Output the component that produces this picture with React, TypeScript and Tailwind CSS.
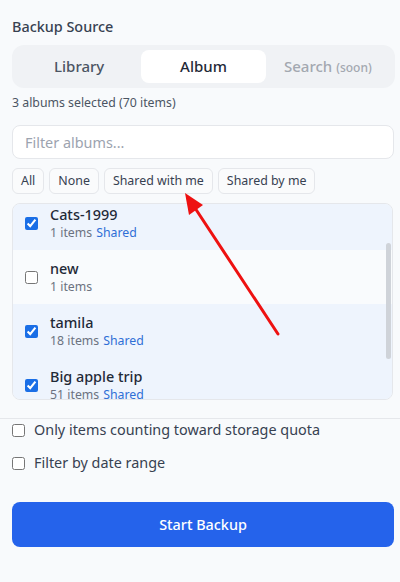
import { useState } from 'react';

type Album = {
  id: string;
  name: string;
  count: number;
  shared: boolean;
};

const albums: Album[] = [
  { id: 'a1', name: 'Cats-1999', count: 1, shared: true },
  { id: 'a2', name: 'new', count: 1, shared: false },
  { id: 'a3', name: 'tamila', count: 18, shared: true },
  { id: 'a4', name: 'Big apple trip', count: 51, shared: true },
  { id: 'a5', name: 'Summer 2021', count: 42, shared: false },
  { id: 'a6', name: 'Screenshots', count: 9, shared: false },
];

const sources = ['Library', 'Album', 'Search'] as const;

export default function App() {
  const [source, setSource] = useState<string>('Album');
  const [selected, setSelected] = useState<string[]>(['a1', 'a3', 'a4']);
  const [filter, setFilter] = useState('');
  const [quotaOnly, setQuotaOnly] = useState(false);
  const [dateRange, setDateRange] = useState(false);

  const toggle = (id: string) => {
    setSelected((prev) =>
      prev.includes(id) ? prev.filter((x) => x !== id) : [...prev, id]
    );
  };

  const totalItems = albums
    .filter((a) => selected.includes(a.id))
    .reduce((sum, a) => sum + a.count, 0);

  return (
    <main className="relative min-h-[582px] w-full bg-[#f8fafc] font-['Noto_Sans',sans-serif] text-[#1f2937]">
      <div className="px-3 pt-[17px]">
        <h2 className="text-[14.4px] leading-5 font-medium text-[#374151]">Backup Source</h2>

        {/* source switcher */}
        <div className="mt-2 grid grid-cols-3 rounded-xl bg-[#f0f2f5] p-[5px] w-[383px]">
          {sources.map((s) => {
            const active = source === s;
            const disabled = s === 'Search';
            return (
              <button
                key={s}
                disabled={disabled}
                onClick={() => setSource(s)}
                className={
                  active
                    ? 'h-[33px] rounded-lg bg-white text-[15px] font-medium text-[#1f2937]'
                    : disabled
                    ? 'h-[33px] rounded-lg text-[15px] font-medium text-[#a3a8b0]'
                    : 'h-[33px] rounded-lg text-[15px] font-medium text-[#4b5563]'
                }
              >
                {s}
                {disabled && <span className="ml-1 text-[12px] font-medium">(soon)</span>}
              </button>
            );
          })}
        </div>

        <p className="mt-[7px] text-[12.3px] leading-4 text-[#4b5563]">
          {selected.length} albums selected ({totalItems} items)
        </p>

        <input
          value={filter}
          onChange={(e) => setFilter(e.target.value)}
          placeholder="Filter albums..."
          className="mt-[14px] h-[34px] w-[382px] rounded-lg border border-[#e5e7eb] bg-white px-3 text-[14.4px] text-[#1f2937] placeholder:text-[#9ca3af] outline-none"
        />

        <div className="mt-[9px] flex gap-[5px]">
          {['All', 'None', 'Shared with me', 'Shared by me'].map((c) => (
            <button
              key={c}
              className="h-[26px] rounded-md border border-[#e5e7eb] bg-[#fafbfc] px-2 text-[12.4px] text-[#374151]"
            >
              {c}
            </button>
          ))}
        </div>

        {/* album list */}
        <div className="relative mt-[9px] h-[197px] w-[381px] overflow-hidden rounded-lg border border-[#e5e7eb] bg-[#f8fafc]">
          <div className="-mt-[8px]">
            {albums
              .filter((a) => a.name.toLowerCase().includes(filter.toLowerCase()))
              .map((a) => {
                const checked = selected.includes(a.id);
                return (
                  <label
                    key={a.id}
                    className={
                      checked
                        ? 'flex h-[54px] cursor-pointer items-center gap-3 bg-[#eef4fd] pl-3'
                        : 'flex h-[54px] cursor-pointer items-center gap-3 bg-[#f9fbfd] pl-3'
                    }
                  >
                    <input
                      type="checkbox"
                      checked={checked}
                      onChange={() => toggle(a.id)}
                      className="m-0 h-[13px] w-[13px] accent-[#1a6ee6]"
                    />
                    <div className="flex flex-col">
                      <span className="text-[14.4px] leading-5 font-medium text-[#1f2937]">{a.name}</span>
                      <span className="text-[12.3px] leading-4 text-[#6b7280]">
                        {a.count} items
                        {a.shared && <span className="ml-1 text-[#2f6fd6]">Shared</span>}
                      </span>
                    </div>
                  </label>
                );
              })}
          </div>
          <div className="absolute right-[1px] top-[39px] h-[116px] w-[5px] rounded-full bg-[#cfd3d9]" />
        </div>
      </div>

      <div className="mt-[18px] border-t border-[#e5e7eb] px-3 pt-[1px]">
        <label className="flex h-5 items-center gap-[9px] text-[14.4px] leading-5 text-[#374151]">
          <input
            type="checkbox"
            checked={quotaOnly}
            onChange={() => setQuotaOnly(!quotaOnly)}
            className="m-0 h-[13px] w-[13px] accent-[#1a6ee6]"
          />
          Only items counting toward storage quota
        </label>
        <label className="mt-[13px] flex h-5 items-center gap-[9px] text-[14.4px] leading-5 text-[#374151]">
          <input
            type="checkbox"
            checked={dateRange}
            onChange={() => setDateRange(!dateRange)}
            className="m-0 h-[13px] w-[13px] accent-[#1a6ee6]"
          />
          Filter by date range
        </label>

        <button className="mt-[29px] h-[45px] w-[382px] rounded-lg bg-[#2563eb] text-[14.4px] font-medium text-white">
          Start Backup
        </button>
      </div>

      {/* annotation arrow */}
      <svg
        className="pointer-events-none absolute left-0 top-0"
        width="400"
        height="582"
        viewBox="0 0 400 582"
      >
        <line x1="278" y1="334" x2="195" y2="208" stroke="#ee1111" strokeWidth="3" strokeLinecap="round" />
        <polygon points="185,193 203,205 189,215" fill="#ee1111" />
      </svg>
    </main>
  );
}
